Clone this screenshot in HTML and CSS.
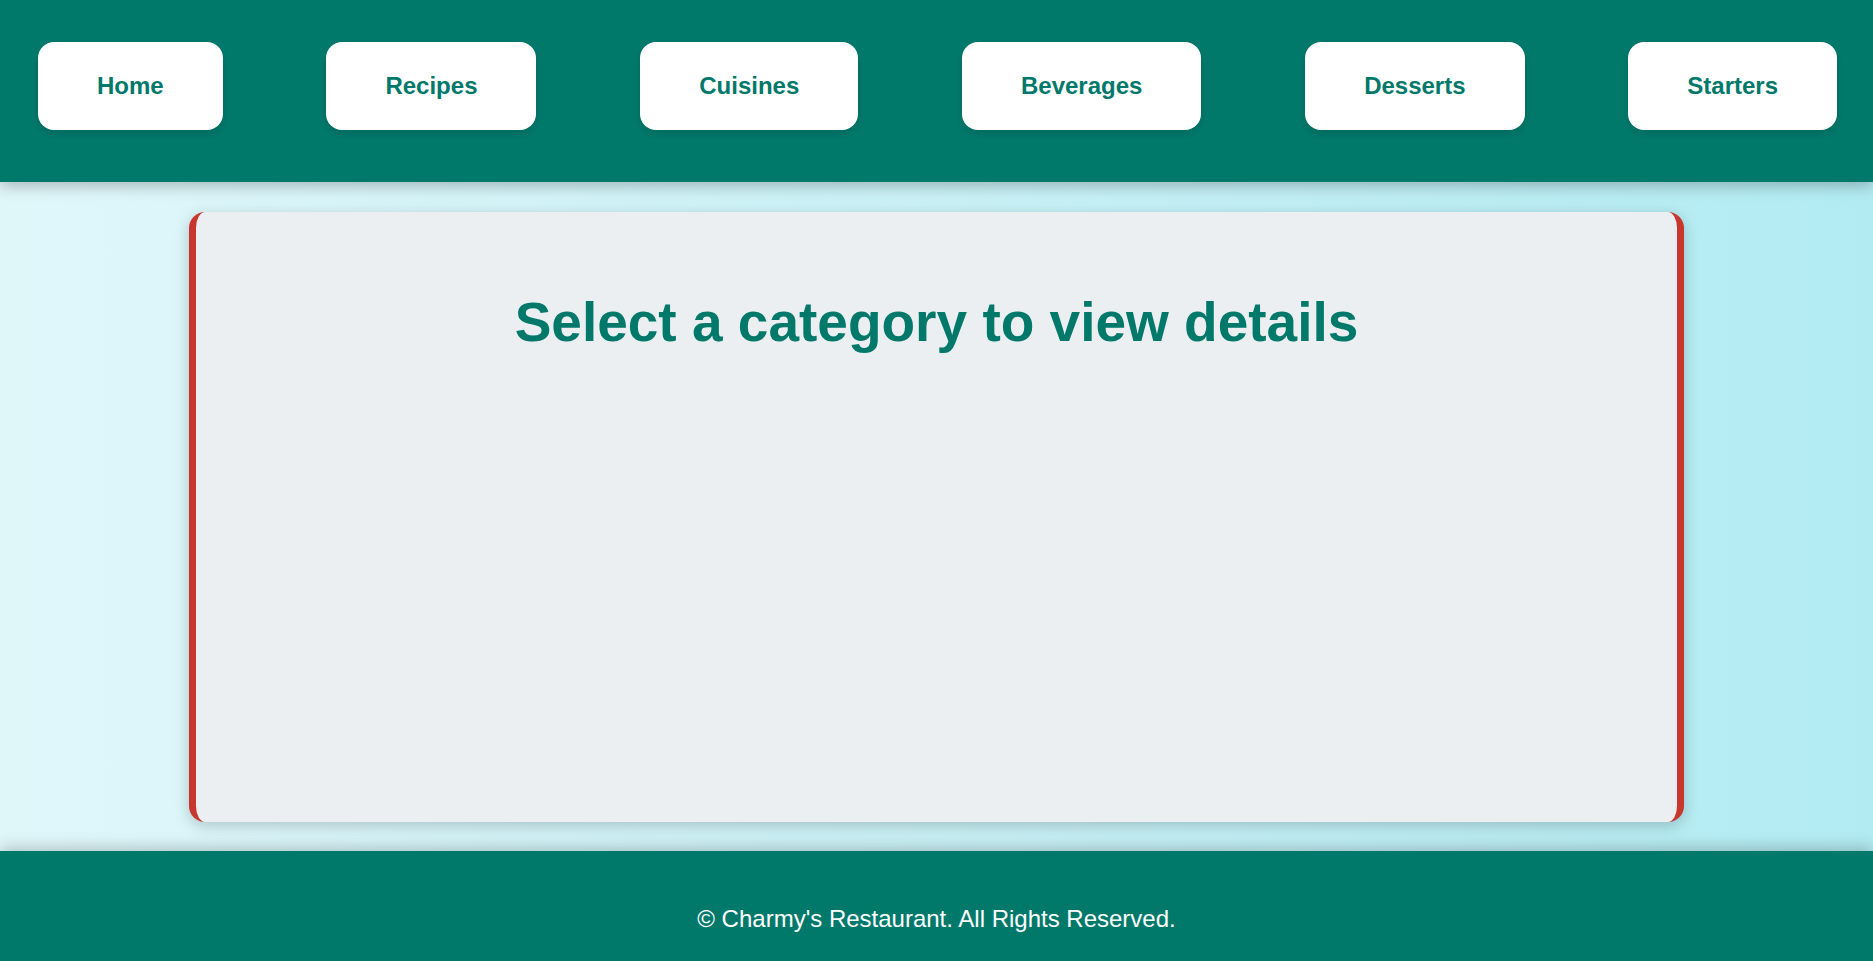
FILE: index.html
```html
<!DOCTYPE html>
<html lang="en">
<head>
<meta charset="UTF-8">
<title>Charmy's Restaurant</title>
<link rel="stylesheet" href="styles.css">
</head>
<body>
<header class="site-header">
  <nav class="nav">
    <a class="nav-btn" href="#">Home</a>
    <a class="nav-btn" href="#">Recipes</a>
    <a class="nav-btn" href="#">Cuisines</a>
    <a class="nav-btn" href="#">Beverages</a>
    <a class="nav-btn" href="#">Desserts</a>
    <a class="nav-btn" href="#">Starters</a>
  </nav>
</header>
<main class="main">
  <section class="card">
    <h2 class="card-title">Select a category to view details</h2>
  </section>
</main>
<footer class="site-footer">
  <p class="footer-text">© Charmy's Restaurant. All Rights Reserved.</p>
</footer>
</body>
</html>
```

FILE: styles.css
```css
* { box-sizing: border-box; }
html, body { margin: 0; padding: 0; }
body {
  font-family: "Liberation Sans", Arial, sans-serif;
  background: linear-gradient(to right, #e0f7fa, #b2ebf2);
  min-height: 100vh;
}
.site-header {
  background: #00796b;
  padding: 42px 36px 52px 38px;
  box-shadow: 0 4px 14px rgba(0, 0, 0, 0.25);
  position: relative;
  z-index: 2;
}
.nav {
  display: flex;
  justify-content: space-between;
  align-items: center;
}
.nav-btn {
  display: block;
  background: #ffffff;
  color: #00796b;
  font-weight: bold;
  font-size: 24px;
  line-height: normal;
  padding: 30px 59px;
  border-radius: 16px;
  text-decoration: none;
  box-shadow: 0 4px 8px rgba(0, 0, 0, 0.12);
}
.main {
  padding: 30px 0 29px;
}
.card {
  width: 79.8%;
  margin: 0 auto;
  min-height: 610px;
  background: #eceff1;
  border-left: 7px solid #c8372d;
  border-right: 7px solid #c8372d;
  border-radius: 16px;
  box-shadow: 0 4px 15px rgba(0, 0, 0, 0.2);
  padding: 30px 20px;
  text-align: center;
}
.card-title {
  margin: 48px 0 0;
  font-size: 55px;
  font-weight: bold;
  color: #00796b;
}
.site-footer {
  background: #00796b;
  padding: 30px 20px;
  text-align: center;
  box-shadow: 0 -4px 14px rgba(0, 0, 0, 0.2);
  position: relative;
}
.footer-text {
  margin: 24px 0;
  color: #ffffff;
  font-size: 24px;
}
```
